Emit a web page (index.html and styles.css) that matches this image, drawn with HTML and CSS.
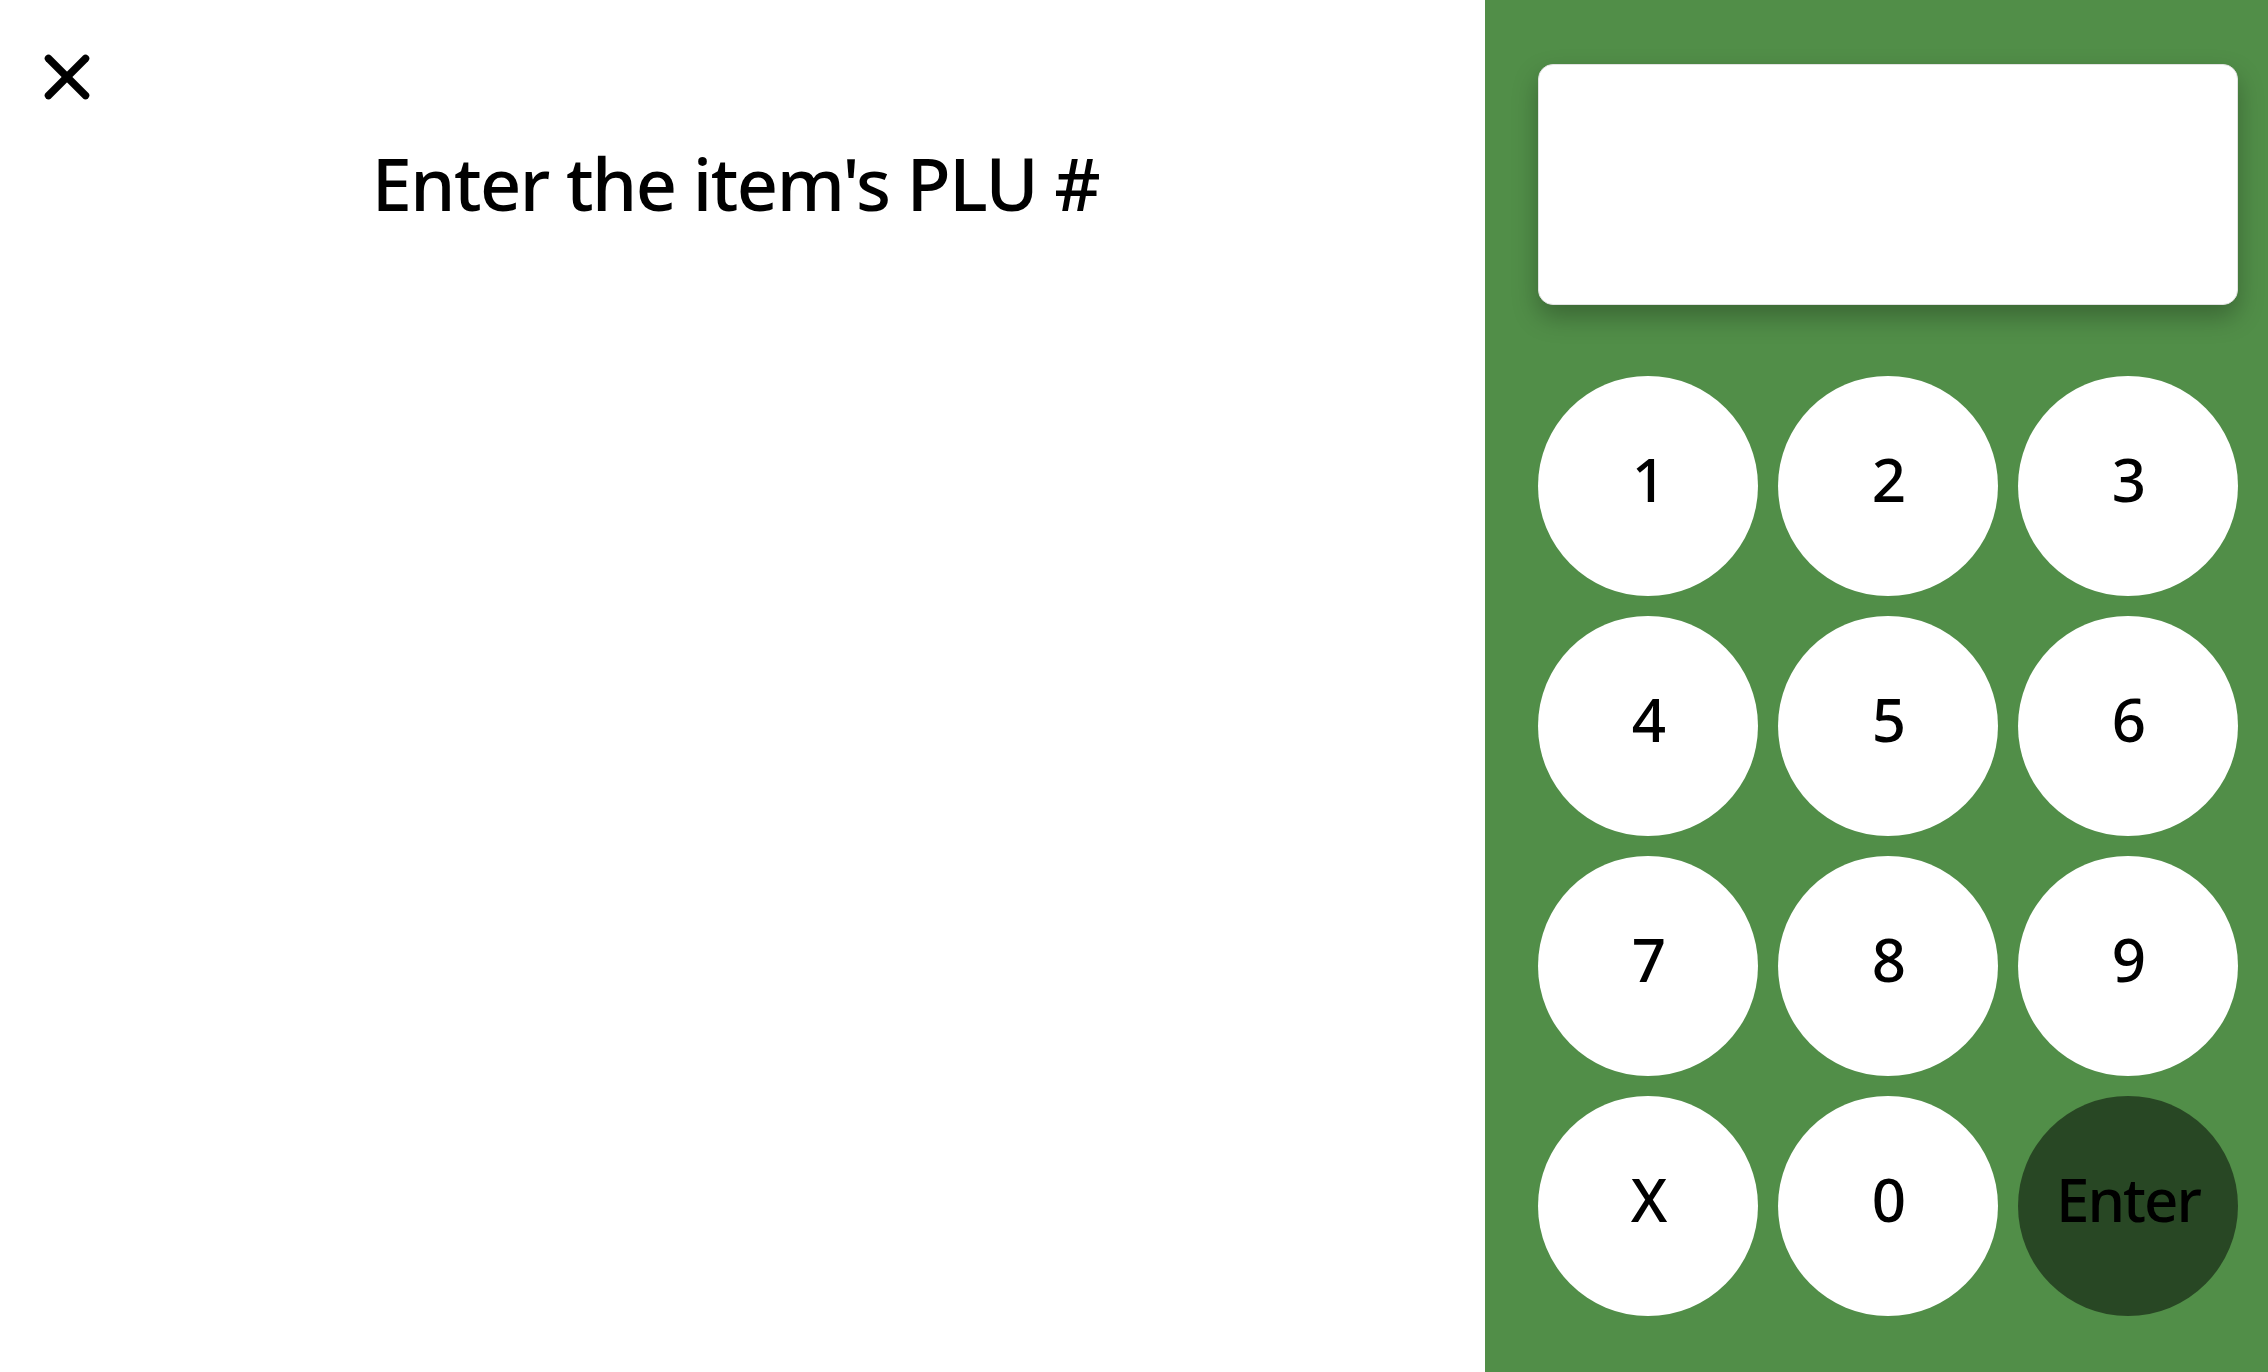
FILE: index.html
```html
<!DOCTYPE html>
<html lang="en">
<head>
<meta charset="utf-8">
<title>Enter PLU</title>
<link rel="stylesheet" href="styles.css">
</head>
<body>
<main class="screen">
  <section class="left">
    <button class="close" aria-label="Close">
      <svg width="48" height="48" viewBox="0 0 48 48">
        <line x1="5.5" y1="5.5" x2="42.5" y2="42.5" stroke="#000" stroke-width="7.5" stroke-linecap="round"/>
        <line x1="42.5" y1="5.5" x2="5.5" y2="42.5" stroke="#000" stroke-width="7.5" stroke-linecap="round"/>
      </svg>
    </button>
    <h1 class="title">Enter the item's PLU #</h1>
  </section>
  <section class="pad">
    <div class="display"></div>
    <div class="keys">
      <button class="key">1</button>
      <button class="key">2</button>
      <button class="key">3</button>
      <button class="key">4</button>
      <button class="key">5</button>
      <button class="key">6</button>
      <button class="key">7</button>
      <button class="key">8</button>
      <button class="key">9</button>
      <button class="key">X</button>
      <button class="key">0</button>
      <button class="key enter">Enter</button>
    </div>
  </section>
</main>
</body>
</html>
```
FILE: styles.css
```css
html, body {
  margin: 0;
  padding: 0;
  background: #fff;
}
body {
  font-family: "Noto Sans", sans-serif;
  color: #000;
}
.screen {
  display: flex;
  width: 2268px;
  height: 1372px;
  overflow: hidden;
}
.left {
  flex: 1;
  padding: 53px 0 0 43px;
  box-sizing: border-box;
}
.close {
  display: block;
  width: 48px;
  height: 48px;
  padding: 0;
  margin: 0;
  border: 0;
  background: none;
}
.close svg { display: block; }
.title {
  margin: 46px 0 0 -43px;
  padding-right: 14px;
  font-size: 72px;
  font-weight: 500;
  letter-spacing: -1.5px;
  line-height: 1;
  text-align: center;
}
.pad {
  width: 783px;
  flex: none;
  background: #518e48;
  padding: 64px 30px 0 53px;
  box-sizing: border-box;
}
.display {
  height: 241px;
  background: #fff;
  border: 1px solid #e2e2e2;
  border-radius: 15px;
  box-sizing: border-box;
  box-shadow: 0 12px 26px rgba(0, 0, 0, 0.28);
}
.keys {
  margin-top: 71px;
  display: grid;
  grid-template-columns: repeat(3, 220px);
  grid-auto-rows: 220px;
  gap: 20px;
}
.key {
  width: 220px;
  height: 220px;
  border-radius: 50%;
  border: 0;
  background: #fff;
  font-family: "Noto Sans", sans-serif;
  font-size: 60px;
  font-weight: 500;
  letter-spacing: -2px;
  line-height: 1;
  color: #000;
  padding: 0 0 14px;
  display: flex;
  align-items: center;
  justify-content: center;
}
.enter {
  background: rgba(0, 0, 0, 0.5);
}
```
